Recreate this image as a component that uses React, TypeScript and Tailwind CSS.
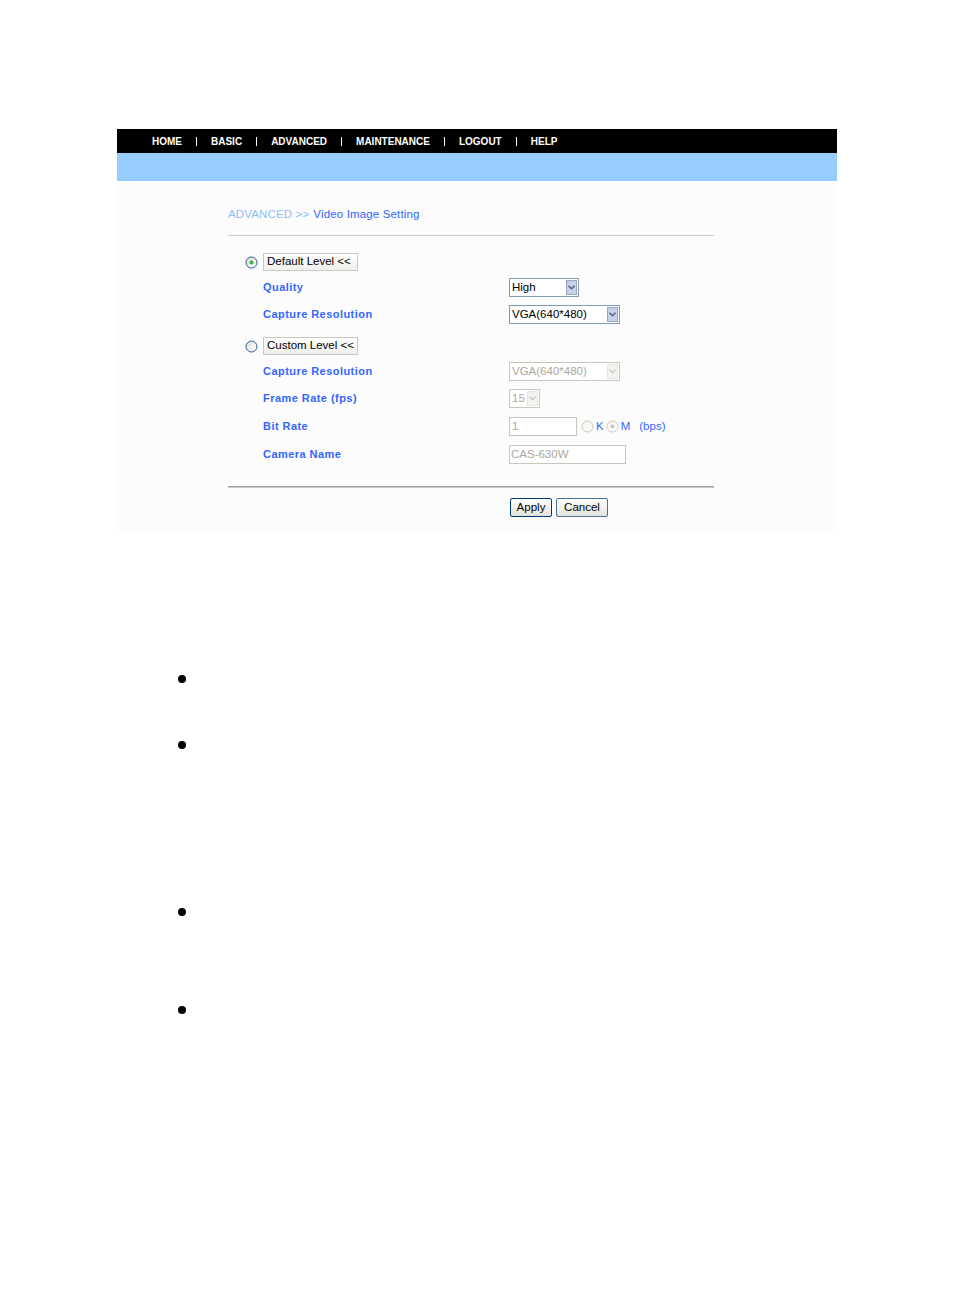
import React from "react";

const font = { fontFamily: '"Liberation Sans", Arial, sans-serif' };

function Radio({ checked, disabled }: { checked?: boolean; disabled?: boolean }) {
  const stroke = disabled ? "#c9c7ba" : "#2a5a8a";
  return (
    <svg width="13" height="13" viewBox="0 0 13 13" className="block">
      <defs>
        <linearGradient id={disabled ? "rgd" : "rg"} x1="0" y1="0" x2="1" y2="1">
          <stop offset="0" stopColor={disabled ? "#f4f4f0" : "#dcdcd6"} />
          <stop offset="1" stopColor="#ffffff" />
        </linearGradient>
      </defs>
      <circle cx="6.5" cy="6.5" r="5.5" fill={`url(#${disabled ? "rgd" : "rg"})`} stroke={stroke} strokeWidth="1" />
      {checked && <circle cx="6.5" cy="6.5" r="2" fill={disabled ? "#c9c7ba" : "#3cb043"} />}
    </svg>
  );
}

function Arrow({ disabled }: { disabled?: boolean }) {
  return (
    <div
      className={`flex h-[15px] w-[11px] items-center justify-center border ${
        disabled ? "border-[#e4e4e0] bg-[#f2f2ee]" : "border-[#9aa6be] bg-[#c7d2e8]"
      }`}
    >
      <svg width="7" height="5" viewBox="0 0 7 5">
        <path d="M0.5 0.8 L3.5 3.8 L6.5 0.8" fill="none" stroke={disabled ? "#c8c8c0" : "#4d6185"} strokeWidth="1.4" />
      </svg>
    </div>
  );
}

function Select({ cls, text, disabled }: { cls: string; text: string; disabled?: boolean }) {
  return (
    <div
      className={`flex h-[19px] items-center justify-between border bg-white pl-[2px] pr-[1px] text-[11.5px] ${cls} ${
        disabled ? "border-[#c9c7ba] text-[#aca899]" : "border-[#7f9db9] text-black"
      }`}
    >
      <span className="leading-none">{text}</span>
      <Arrow disabled={disabled} />
    </div>
  );
}

function LevelButton({ text }: { text: string }) {
  return (
    <div className="flex h-[18px] w-[95px] items-center border border-[#c8c8c8] bg-gradient-to-b from-white to-[#f0efea] pl-[3px] text-[11.5px] leading-none text-black">
      {text}
    </div>
  );
}

function Label({ children }: { children: React.ReactNode }) {
  return (
    <div className="w-[246px] text-[11px] font-bold leading-none tracking-[0.45px] text-[#3366ff]">{children}</div>
  );
}

function Row({ mt, label, children }: { mt: string; label: string; children: React.ReactNode }) {
  return (
    <div className={`flex h-[19px] items-center pl-[35px] ${mt}`}>
      <Label>{label}</Label>
      {children}
    </div>
  );
}

function NavItem({ t }: { t: string }) {
  return <span className="text-[10px] font-bold leading-none text-white">{t}</span>;
}

function Sep() {
  return <span className="mx-[14px] h-[9px] w-px bg-white" />;
}

export default function App() {
  return (
    <div className="min-h-[1311px] w-[954px] bg-white pt-[129px]" style={font}>
      <div className="ml-[117px] w-[720px]">
        <div className="flex h-[24px] items-center bg-black pl-[35px] pt-[1px]">
          <NavItem t="HOME" />
          <Sep />
          <NavItem t="BASIC" />
          <Sep />
          <NavItem t="ADVANCED" />
          <Sep />
          <NavItem t="MAINTENANCE" />
          <Sep />
          <NavItem t="LOGOUT" />
          <Sep />
          <NavItem t="HELP" />
        </div>
        <div className="h-[28px] bg-[#99ccff]" />
        <div className="h-[351px] bg-[#fcfcfc] pl-[111px] pt-[26px]">
          <div className="w-[486px]">
            <div className="flex h-[16px] items-center text-[11.5px] leading-none tracking-[0.15px]">
              <span className="text-[#8cbcf5]">ADVANCED &gt;&gt;</span>
              <span className="ml-[4px] text-[#3366ff]">Video Image Setting</span>
            </div>
            <div className="mt-[12px] h-[1px] bg-[#c8c8c8]" />

            <div className="mt-[17px] flex h-[18px] items-center pl-[17px]">
              <Radio checked />
              <div className="ml-[5px]">
                <LevelButton text="Default Level <<" />
              </div>
            </div>
            <Row mt="mt-[7px]" label="Quality">
              <Select cls="w-[70px]" text="High" />
            </Row>
            <Row mt="mt-[8px]" label="Capture Resolution">
              <Select cls="w-[111px]" text="VGA(640*480)" />
            </Row>

            <div className="mt-[13px] flex h-[18px] items-center pl-[17px]">
              <Radio />
              <div className="ml-[5px]">
                <LevelButton text="Custom Level <<" />
              </div>
            </div>
            <Row mt="mt-[7px]" label="Capture Resolution">
              <Select cls="w-[111px]" text="VGA(640*480)" disabled />
            </Row>
            <Row mt="mt-[8px]" label="Frame Rate (fps)">
              <Select cls="w-[31px]" text="15" disabled />
            </Row>
            <Row mt="mt-[9px]" label="Bit Rate">
              <div className="flex h-[19px] w-[68px] items-center border border-[#c9c7ba] bg-white pl-[2px] text-[11.5px] leading-none text-[#aca899]">
                1
              </div>
              <div className="ml-[4px] flex items-center text-[11.5px] leading-none text-[#3366ff]">
                <Radio disabled />
                <span className="ml-[2px]">K</span>
                <span className="ml-[2px]">
                  <Radio checked disabled />
                </span>
                <span className="ml-[2px]">M</span>
                <span className="ml-[9px]">(bps)</span>
              </div>
            </Row>
            <Row mt="mt-[9px]" label="Camera Name">
              <div className="flex h-[19px] w-[117px] items-center border border-[#c9c7ba] bg-white pl-[1px] text-[11.5px] leading-none text-[#aca899]">
                CAS-630W
              </div>
            </Row>

            <div className="mt-[22px] h-[2px] border-t border-[#a0a0a8] bg-[#c8c8cc]" />

            <div className="mt-[10px] flex pl-[282px]">
              <button className="h-[19px] w-[42px] rounded-[2px] border border-[#003c74] bg-gradient-to-b from-white to-[#e3e2dc] text-[11.5px] leading-none text-black">
                Apply
              </button>
              <button className="ml-[4px] h-[19px] w-[52px] rounded-[2px] border border-[#4a6f9a] bg-gradient-to-b from-white to-[#e3e2dc] text-[11.5px] leading-none text-black">
                Cancel
              </button>
            </div>
          </div>
        </div>
      </div>

      <div className="ml-[178px]">
        <div className="mt-[143px] h-[8px] w-[8px] rounded-full bg-black" />
        <div className="mt-[58px] h-[8px] w-[8px] rounded-full bg-black" />
        <div className="mt-[159px] h-[8px] w-[8px] rounded-full bg-black" />
        <div className="mt-[90px] h-[8px] w-[8px] rounded-full bg-black" />
      </div>
    </div>
  );
}
